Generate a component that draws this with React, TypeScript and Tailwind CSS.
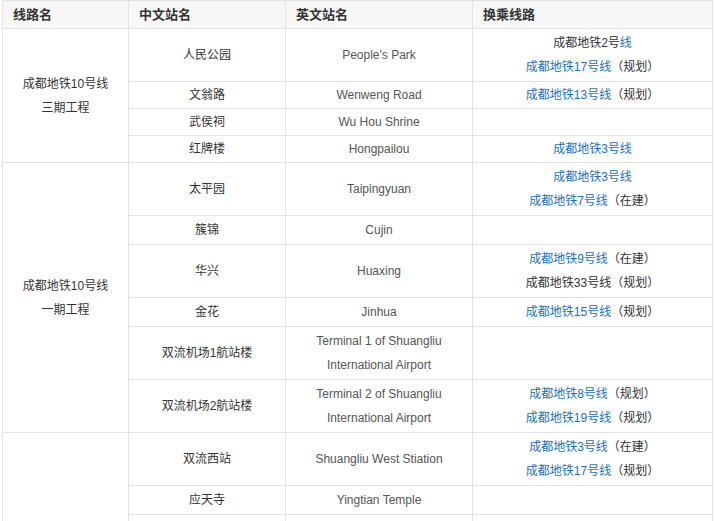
import React from 'react';

const L = ({ children }: { children: React.ReactNode }) => <span className="text-[#1a6fc4]">{children}</span>;

type Row = { h: number; zh: string; en: React.ReactNode; tr?: React.ReactNode };

const td = 'border border-[#e3e3e3] text-center align-middle leading-[24px]';

const groups: { name: React.ReactNode; rows: Row[] }[] = [
  {
    name: <>成都地铁10号线<br />三期工程</>,
    rows: [
      { h: 53, zh: '人民公园', en: "People's Park", tr: <>成都地铁2号<L>线</L><br /><L>成都地铁17号线</L>（规划）</> },
      { h: 27, zh: '文翁路', en: 'Wenweng Road', tr: <><L>成都地铁13号线</L>（规划）</> },
      { h: 27, zh: '武侯祠', en: 'Wu Hou Shrine' },
      { h: 27, zh: '红牌楼', en: 'Hongpailou', tr: <L>成都地铁3号线</L> },
    ],
  },
  {
    name: <>成都地铁10号线<br />一期工程</>,
    rows: [
      { h: 53, zh: '太平园', en: 'Taipingyuan', tr: <><L>成都地铁3号线</L><br /><L>成都地铁7号线</L>（在建）</> },
      { h: 29, zh: '簇锦', en: 'Cujin' },
      { h: 53, zh: '华兴', en: 'Huaxing', tr: <><L>成都地铁9号线</L>（在建）<br />成都地铁33号线（规划）</> },
      { h: 29, zh: '金花', en: 'Jinhua', tr: <><L>成都地铁15号线</L>（规划）</> },
      { h: 53, zh: '双流机场1航站楼', en: <>Terminal 1 of Shuangliu<br />International Airport</> },
      { h: 53, zh: '双流机场2航站楼', en: <>Terminal 2 of Shuangliu<br />International Airport</>, tr: <><L>成都地铁8号线</L>（规划）<br /><L>成都地铁19号线</L>（规划）</> },
    ],
  },
  {
    name: '',
    rows: [
      { h: 53, zh: '双流西站', en: 'Shuangliu West Stiation', tr: <><L>成都地铁3号线</L>（在建）<br /><L>成都地铁17号线</L>（规划）</> },
      { h: 29, zh: '应天寺', en: 'Yingtian Temple' },
      { h: 20, zh: '', en: '' },
    ],
  },
];

export default function App() {
  return (
    <div className="w-[714px] h-[521px] overflow-hidden bg-[#f5f5f5] text-[12px] text-[#333]" style={{ fontFamily: '"Liberation Sans", Arial, "Noto Sans CJK SC", sans-serif' }}>
      <div className="bg-white pl-[2px] pr-[2px]">
        <table className="w-[710px] border-collapse table-fixed">
          <colgroup>
            <col className="w-[126px]" />
            <col className="w-[157px]" />
            <col className="w-[187px]" />
            <col className="w-[240px]" />
          </colgroup>
          <thead>
            <tr className="h-[28px] bg-[#f7f7f7]">
              {['线路名', '中文站名', '英文站名', '换乘线路'].map((t) => (
                <th key={t} className="border border-[#e3e3e3] text-left pl-[10px] font-bold text-[13px] text-[#333]">{t}</th>
              ))}
            </tr>
          </thead>
          <tbody>
            {groups.map((g, gi) =>
              g.rows.map((r, ri) => (
                <tr key={`${gi}-${ri}`} style={{ height: r.h }}>
                  {ri === 0 && (
                    <td rowSpan={g.rows.length} className={td}>{g.name}</td>
                  )}
                  <td className={td}>{r.zh}</td>
                  <td className={`${td} text-[#555]`}>{r.en}</td>
                  <td className={td}>{r.tr}</td>
                </tr>
              ))
            )}
          </tbody>
        </table>
      </div>
    </div>
  );
}
